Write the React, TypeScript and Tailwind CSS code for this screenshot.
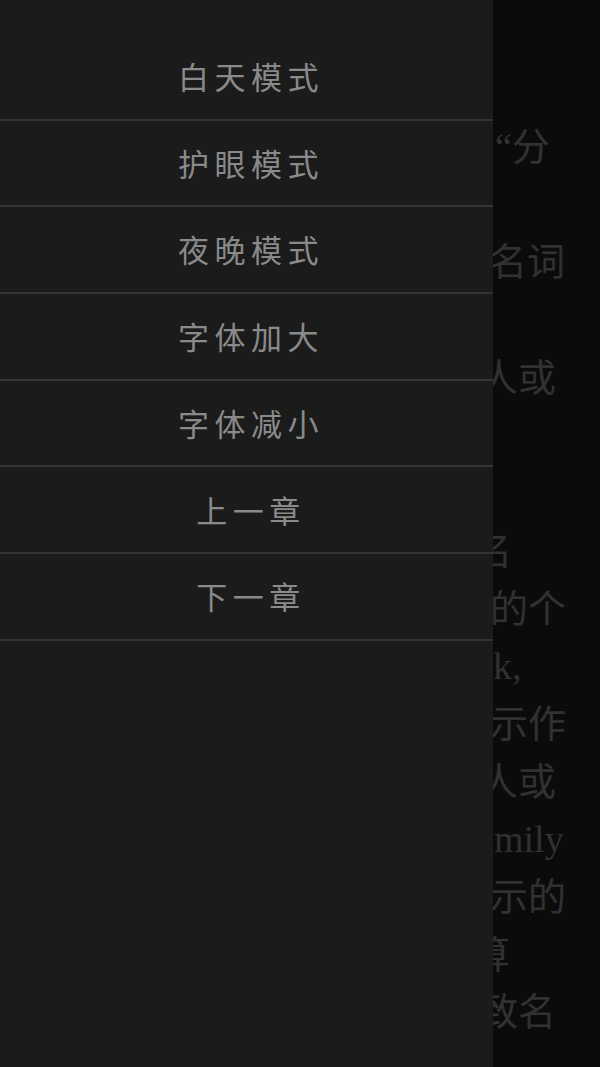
const menu = ["白天模式", "护眼模式", "夜晚模式", "字体加大", "字体减小", "上一章", "下一章"];

// page text behind the drawer: only the right tail of each line shows
const lines = [
  { text: "“分", cls: "pl-[495px]" },
  { text: "", cls: "" },
  { text: "名词", cls: "pl-[489px]" },
  { text: "", cls: "" },
  { text: "人或", cls: "pl-[480px]" },
  { text: "", cls: "" },
  { text: "", cls: "" },
  { text: "名", cls: "pl-[474px]" },
  { text: "的个", cls: "pl-[490px]" },
  { text: "k,", cls: "pl-[493px]" },
  { text: "示作", cls: "pl-[490px]" },
  { text: "人或", cls: "pl-[480px]" },
  { text: "mily", cls: "pl-[494px]" },
  { text: "示的", cls: "pl-[490px]" },
  { text: "算", cls: "pl-[472px]" },
  { text: "致名", cls: "pl-[480px]" },
];

export default function App() {
  return (
    <div className="relative w-[600px] h-[1067px] overflow-hidden bg-[#0b0b0b]">
      <div
        className="pt-[119px] text-[38px] text-[#313131]"
        style={{ fontFamily: '"Liberation Serif", "Noto Sans CJK SC", serif' }}
      >
        {lines.map((l, i) => (
          <div key={i} className={`h-[57.7px] leading-[57.7px] whitespace-nowrap ${l.cls}`}>
            {l.text}
          </div>
        ))}
      </div>

      <nav
        className="absolute left-0 top-0 h-full w-[493px] bg-[#1b1b1b] pt-[34px]"
        style={{ fontFamily: '"Noto Sans CJK SC", sans-serif' }}
      >
        {menu.map((m) => (
          <div
            key={m}
            className="h-[86.7px] flex items-center justify-center pl-[9px] border-b-2 border-[#343434] text-[31px] tracking-[5.5px] text-[#8a8a8a]"
          >
            {m}
          </div>
        ))}
      </nav>
    </div>
  );
}
